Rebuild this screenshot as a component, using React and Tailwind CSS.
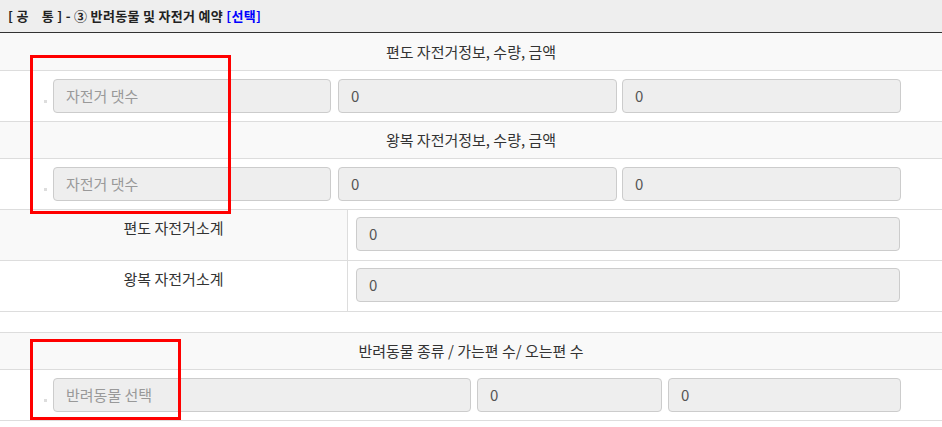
import React from "react";

const font = { fontFamily: '"Noto Sans CJK KR", "Noto Sans", sans-serif' };

function Field({ w, ml = "", value, placeholder }) {
  return (
    <div
      className={`${w} ${ml} h-[34px] shrink-0 rounded-[4px] border border-[#cccccc] bg-[#eeeeee] flex items-center px-3 text-[15px] leading-[20px] ${
        placeholder ? "text-[#999999]" : "text-[#555555]"
      }`}
    >
      {placeholder || value}
    </div>
  );
}

function TitleRow({ h, children }) {
  return (
    <div className={`${h} border-b border-[#dddddd] bg-[#f9f9f9] flex items-center justify-center text-[15px] leading-[20px] text-[#333333]`}>
      {children}
    </div>
  );
}

function BikeRow() {
  return (
    <div className="h-[51px] border-b border-[#dddddd] flex items-start pt-[8px] pl-[44px]">
      <span className="block w-[3px] h-[3px] bg-[#dddddd] mt-[21px] mr-[6px] shrink-0" />
      <Field w="w-[278px]" placeholder="자전거 댓수" />
      <Field w="w-[279px]" ml="ml-[7px]" value="0" />
      <Field w="w-[279px]" ml="ml-[5px]" value="0" />
    </div>
  );
}

function SubRow({ label, bg }) {
  return (
    <div className="h-[51px] border-b border-[#dddddd] flex">
      <div className={`w-[348px] shrink-0 border-r border-[#dddddd] ${bg} flex justify-center pt-[8px] text-[15px] leading-[20px] text-[#333333]`}>
        {label}
      </div>
      <div className="flex-1 pl-[8px] pt-[7px]">
        <Field w="w-[544px]" value="0" />
      </div>
    </div>
  );
}

export default function App() {
  return (
    <div className="relative w-[942px] h-[427px] bg-white overflow-hidden" style={font}>
      <div className="h-[33px] bg-[#eeeeee] border-b border-[#333333] flex items-center pl-[8px] text-[13px] font-bold tracking-[0.3px] text-[#222222] whitespace-pre">
        <span>[ 공    통 ] - ③ 반려동물 및 자전거 예약 </span>
        <span className="text-[#0000ff]">[선택]</span>
      </div>
      <TitleRow h="h-[38px]">편도 자전거정보, 수량, 금액</TitleRow>
      <BikeRow />
      <TitleRow h="h-[37px]">왕복 자전거정보, 수량, 금액</TitleRow>
      <BikeRow />
      <SubRow label="편도 자전거소계" bg="bg-[#f9f9f9]" />
      <SubRow label="왕복 자전거소계" bg="bg-white" />
      <div className="h-[21px] border-b border-[#dddddd]" />
      <TitleRow h="h-[37px]">반려동물 종류 / 가는편 수/ 오는편 수</TitleRow>
      <div className="h-[51px] border-b border-[#dddddd] flex items-start pt-[8px] pl-[44px]">
        <span className="block w-[3px] h-[3px] bg-[#dddddd] mt-[21px] mr-[6px] shrink-0" />
        <Field w="w-[418px]" placeholder="반려동물 선택" />
        <Field w="w-[185px]" ml="ml-[6px]" value="0" />
        <Field w="w-[233px]" ml="ml-[6px]" value="0" />
      </div>

      <div className="absolute left-[30px] top-[55px] w-[201px] h-[159px] border-[3px] border-[#ff0000] pointer-events-none" />
      <div className="absolute left-[30px] top-[339px] w-[151px] h-[81px] border-[3px] border-[#ff0000] pointer-events-none" />
    </div>
  );
}
